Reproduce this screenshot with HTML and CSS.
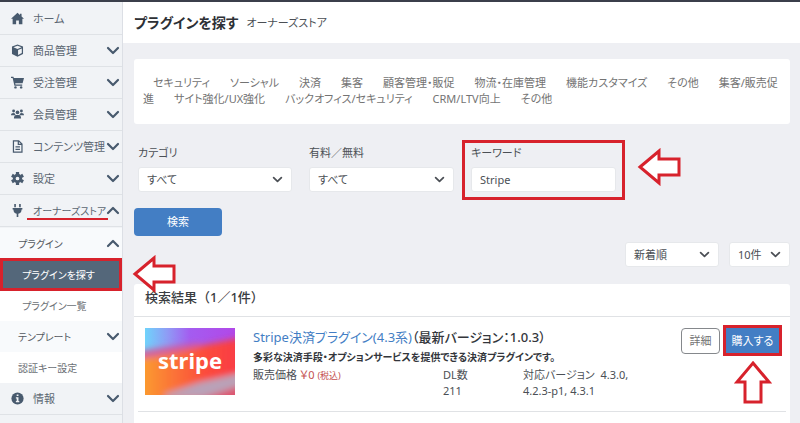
FILE: index.html
```
<!DOCTYPE html>
<html lang="ja">
<head>
<meta charset="UTF-8">
<meta name="viewport" content="width=device-width,initial-scale=1.0">
<title>プラグインを探す オーナーズストア</title>
<link rel="stylesheet" href="styles.css">
</head>
<body>
<!-- 共通で使う図形 -->
<svg class="defs" width="0" height="0" aria-hidden="true">
    <symbol id="down" viewBox="0 0 14 9"><path d="M2 2l5 5 5-5" fill="none" stroke="currentColor" stroke-width="2.2" stroke-linecap="round" stroke-linejoin="round"/></symbol>
    <symbol id="up" viewBox="0 0 14 9"><path d="M2 7l5-5 5 5" fill="none" stroke="currentColor" stroke-width="2.2" stroke-linecap="round" stroke-linejoin="round"/></symbol>
    <symbol id="arrow" viewBox="0 0 44 38"><path d="M3 19L22 3v8h20v16H22v8z" fill="#fff" stroke="#d7222c" stroke-width="3"/></symbol>
</svg>
<div class="page">
    <!-- 左のメニュー -->
    <nav class="side">
        <a class="item" href="#">
            <svg class="icon" viewBox="0 0 16 16"><path d="M8 1L0 8.200h2V15h4.300v-4.500h3.400V15H14V8.200h2L13 5.500V2h-2v1.700z"/></svg>
            <span>ホーム</span>
        </a>
        <a class="item" href="#">
            <svg class="icon" viewBox="0 0 16 16"><path d="M8 .5l6.800 2.700v9L8 15.600 1.200 12.200v-9z"/><path d="M3 4l5 2 5-2-5-1.900z" fill="#f1f3f6"/><path d="M8.700 7.400l4.600-1.900v5.700L8.700 13.500z" fill="#f1f3f6"/></svg>
            <span>商品管理</span>
            <svg class="chev"><use href="#down"/></svg>
        </a>
        <a class="item" href="#">
            <svg class="icon" viewBox="0 0 16 16"><path d="M0 1h3l.5 1.500H16L14.300 9H5.200l.3 1.500h8.300V12H4.200L2 2.500H0z"/><circle cx="5.500" cy="14" r="1.500"/><circle cx="12.500" cy="14" r="1.500"/></svg>
            <span>受注管理</span>
            <svg class="chev"><use href="#down"/></svg>
        </a>
        <a class="item" href="#">
            <svg class="icon" viewBox="0 1 20 16"><circle cx="4" cy="3.600" r="2.200"/><circle cx="16" cy="3.600" r="2.200"/><circle cx="10" cy="5.800" r="2.800"/><path d="M0 10c0-2.500 1.500-3.500 3.500-3.500 1.200 0 2 .2 2.600 1L7 10zM20 10c0-2.500-1.500-3.500-3.500-3.500-1.200 0-2 .2-2.600 1L13 10zM4.500 15c0-3.500 1.500-5.300 4-5.300h3c2.500 0 4 1.800 4 5.300z"/></svg>
            <span>会員管理</span>
            <svg class="chev"><use href="#down"/></svg>
        </a>
        <a class="item" href="#">
            <svg class="icon" viewBox="0 0 16 16"><path d="M3 1h6.500L13.500 5v10H3zM9 1v4.500h4.500M5.500 8.500H11M5.500 11.500H11" fill="none" stroke="currentColor" stroke-width="1.500"/></svg>
            <span>コンテンツ管理</span>
            <svg class="chev"><use href="#down"/></svg>
        </a>
        <a class="item" href="#">
            <svg class="icon" viewBox="0 0 16 16"><circle cx="8" cy="8" r="4" fill="none" stroke="currentColor" stroke-width="3.400"/><path d="M8 0v3M8 13v3M1.100 4l2.600 1.500M12.300 10.500l2.600 1.500M1.100 12l2.600-1.500M12.300 5.500L14.900 4" stroke="currentColor" stroke-width="4"/></svg>
            <span>設定</span>
            <svg class="chev"><use href="#down"/></svg>
        </a>
        <a class="item" href="#">
            <svg class="icon" viewBox="0 0 16 16"><path d="M4 0h2v4H4zM10 0h2v4h-2zM2 5h12v1.800h-1c0 3-1.500 4.700-4 5.200v4H7v-4C4.500 11.500 3 9.800 3 6.800H2z"/></svg>
            <span class="marked">オーナーズストア</span>
            <svg class="chev"><use href="#up"/></svg>
        </a>
        <div class="sub">
            <a class="subitem head" href="#"><span>プラグイン</span><svg class="chev"><use href="#up"/></svg></a>
            <a class="subitem child active" href="#">プラグインを探す
                <svg class="point point-menu"><use href="#arrow"/></svg>
            </a>
            <a class="subitem child" href="#">プラグイン一覧</a>
            <a class="subitem head" href="#"><span>テンプレート</span><svg class="chev"><use href="#down"/></svg></a>
            <a class="subitem" href="#">認証キー設定</a>
        </div>
        <a class="item" href="#">
            <svg class="icon" viewBox="0 0 16 16"><circle cx="8" cy="8" r="7.500"/><path d="M7 3h2.200v2H7zM6 6.500h3.200V11h1v1.500H6V11h1V8H6z" fill="#f1f3f6"/></svg>
            <span>情報</span>
            <svg class="chev"><use href="#down"/></svg>
        </a>
    </nav>
    <!-- 右の内容 -->
    <div class="main">
        <header class="title">
            <h1>プラグインを探す</h1>
            <span>オーナーズストア</span>
        </header>
        <main class="content">
            <div class="card tags">
                <a href="#">セキュリティ</a><a href="#">ソーシャル</a><a href="#">決済</a><a href="#">集客</a><a href="#">顧客管理・販促</a><a href="#">物流・在庫管理</a><a href="#">機能カスタマイズ</a><a href="#">その他</a><a href="#">集客/販売促進</a><a href="#">サイト強化/UX強化</a><a href="#">バックオフィス/セキュリティ</a><a href="#">CRM/LTV向上</a><a href="#">その他</a>
            </div>
            <form>
                <div class="filters">
                    <div class="field">
                        <label for="category">カテゴリ</label>
                        <div class="select">
                            <select id="category"><option>すべて</option></select>
                            <svg><use href="#down"/></svg>
                        </div>
                    </div>
                    <div class="field">
                        <label for="price">有料／無料</label>
                        <div class="select">
                            <select id="price"><option>すべて</option></select>
                            <svg><use href="#down"/></svg>
                        </div>
                    </div>
                    <div class="field keyword">
                        <label for="keyword">キーワード</label>
                        <input id="keyword" type="text" value="Stripe">
                        <svg class="point point-key"><use href="#arrow"/></svg>
                    </div>
                </div>
                <button class="search" type="submit">検索</button>
                <div class="sort">
                    <div class="select order">
                        <select aria-label="並び順"><option>新着順</option></select>
                        <svg><use href="#down"/></svg>
                    </div>
                    <div class="select count">
                        <select aria-label="表示件数"><option>10件</option></select>
                        <svg><use href="#down"/></svg>
                    </div>
                </div>
            </form>
            <section class="card result">
                <h2>検索結果（1／1件）</h2>
                <article class="plugin">
                    <svg class="logo" viewBox="0 0 90 67" role="img" aria-label="stripe">
                        <defs>
                            <linearGradient id="sky" x1="0" y1="0" x2="1" y2="0"><stop offset="0" stop-color="#6fd3fb"/><stop offset=".25" stop-color="#8f9bf5"/><stop offset=".5" stop-color="#a45cf0"/><stop offset="1" stop-color="#b148e8"/></linearGradient>
                            <linearGradient id="fire" x1="0" y1="0" x2="1" y2="0"><stop offset="0" stop-color="#fba62c"/><stop offset=".3" stop-color="#fb7a36"/><stop offset=".65" stop-color="#fc4a3c"/><stop offset="1" stop-color="#f83a48"/></linearGradient>
                            <filter id="soft" x="-20%" y="-20%" width="140%" height="140%"><feGaussianBlur stdDeviation="3"/></filter>
                        </defs>
                        <rect width="90" height="67" fill="url(#sky)"/>
                        <g filter="url(#soft)">
                            <path d="M-10 28L30 22 65 16 100 9v70H-10z" fill="url(#fire)"/>
                            <path d="M-10 24L30 18 55 15 55 19 30 25-10 32z" fill="#d45a9c"/>
                            <path d="M20 66L55 54 100 44v12L60 70H20z" fill="#b9a2b8"/>
                            <path d="M50 72L100 57v18z" fill="#dd5570"/>
                        </g>
                        <text x="45" y="41" text-anchor="middle">stripe</text>
                    </svg>
                    <div class="info">
                        <h3><a href="#">Stripe決済プラグイン(4.3系)</a>（最新バージョン：1.0.3）</h3>
                        <p class="desc">多彩な決済手段・オプションサービスを提供できる決済プラグインです。</p>
                        <div class="data">
                            <p>販売価格 <span class="yen">￥0 <small>(税込)</small></span></p>
                            <p>DL数<br>211</p>
                            <p>対応バージョン&nbsp; 4.3.0, 4.2.3-p1, 4.3.1</p>
                        </div>
                    </div>
                    <div class="buttons">
                        <button class="detail" type="button">詳細</button>
                        <div class="buywrap">
                            <button class="buy" type="button">購入する</button>
                            <svg class="point point-buy"><use href="#arrow"/></svg>
                        </div>
                    </div>
                </article>
            </section>
        </main>
    </div>
</div>
</body>
</html>
```
FILE: styles.css
```
/*初期化*/
*{
    margin: 0;
    padding: 0;
    box-sizing: border-box;
}
body{
    font: 11px/16px "Noto Sans", "Noto Sans CJK JP", sans-serif;
    font-feature-settings: "palt";
    color: #4b4f55;
    background: #eeeff3;
    border-top: 2px solid #3b3f4b;
    overflow: hidden;
}
a{
    color: inherit;
    text-decoration: none;
}
button, input, select{
    font: inherit;
    font-feature-settings: inherit;
    color: inherit;
}
.defs{
    position: absolute;
}
.page{
    display: flex;
    min-height: 100vh;
}
/*左のメニュー*/
.side{
    flex: 0 0 123px;
    min-width: 0;
    padding-top: 1px;
    background: #f1f3f6;
    border-right: 1px solid #dcdfe5;
    white-space: nowrap;
}
.item{
    display: flex;
    align-items: center;
    height: 32px;
    padding: 0 2px 0 11px;
    border-bottom: 1px solid #dfe2e6;
    color: #5b6672;
}
.icon{
    flex: none;
    width: 13px;
    height: 13px;
    margin-right: 9px;
    fill: currentColor;
    color: #485a6e;
}
.chev{
    flex: none;
    width: 14px;
    height: 9px;
    margin-left: auto;
    color: #485a6e;
}
.marked{
    position: relative;
    font-size: 10px;
}
/*赤い下線*/
.marked::after{
    content: "";
    position: absolute;
    left: -6px;
    right: -2px;
    bottom: -1px;
    height: 2px;
    background: #d7222c;
}
.sub{
    padding-top: 1px;
}
.subitem{
    display: flex;
    align-items: center;
    height: 31px;
    padding: 0 2px 0 18px;
    background: #fff;
    color: #6b6f75;
    font-size: 10px;
}
.subitem.head{
    background: #f8fafc;
    color: #53585f;
}
.subitem.child{
    padding-left: 22px;
}
.subitem.active{
    position: relative;
    height: 33px;
    margin: -1px 0;
    padding-left: 19px;
    border: 3px solid #d7222c;
    background: #54677a;
    color: #fff;
}
/*赤い矢印*/
.point{
    position: absolute;
    width: 44px;
    height: 38px;
    z-index: 1;
}
.point-menu{
    left: 129px;
    top: -6px;
}
.point-key{
    left: calc(100% + 21px);
    top: 3px;
}
.point-buy{
    left: 8px;
    top: 38px;
    transform: rotate(90deg);
}
/*見出し*/
.main{
    flex: 1;
    min-width: 0;
}
.title{
    display: flex;
    align-items: center;
    gap: 8px;
    height: 41px;
    padding-left: 11px;
    background: #fff;
}
.title h1{
    font-size: 14px;
    color: #2d3035;
}
.content{
    padding: 16px 10px 0 11px;
}
.card{
    background: #fff;
    border-radius: 3px;
}
.tags{
    padding: 16px 8px 17px 9px;
    color: #737373;
}
.tags a{
    margin: 0 10px;
}
/*検索条件*/
.filters{
    display: grid;
    grid-template-columns: 154fr 145fr 145fr 157fr;
    gap: 17px;
    padding: 21px 0 0 4px;
}
.field label{
    display: block;
    margin-bottom: 6px;
}
.field input, .select select{
    display: block;
    width: 100%;
    height: 25px;
    padding: 0 8px;
    border: 1px solid #e6e8eb;
    border-radius: 3px;
    background: #fff;
    appearance: none;
}
.select{
    position: relative;
}
.select svg{
    position: absolute;
    right: 9px;
    top: 9px;
    width: 11px;
    height: 7px;
    pointer-events: none;
}
.keyword{
    position: relative;
}
/*キーワードを囲む赤い枠*/
.keyword::before{
    content: "";
    position: absolute;
    inset: -5px -9px -8px;
    border: 3px solid #d7222c;
    pointer-events: none;
}
.search{
    display: block;
    width: 88px;
    height: 28px;
    margin-top: 16px;
    border: 0;
    border-radius: 4px;
    background: #437ec4;
    color: #fff;
}
.sort{
    display: flex;
    justify-content: flex-end;
    gap: 10px;
    margin-top: 6px;
}
.order{
    width: 94px;
}
.count{
    width: 61px;
}
/*検索結果*/
.result{
    min-height: 160px;
    margin-top: 17px;
}
.result h2{
    height: 33px;
    padding-left: 11px;
    border-bottom: 1px solid #e0e2e5;
    font-size: 13px;
    font-weight: 500;
    font-feature-settings: normal;
    line-height: 27px;
    color: #3a3d42;
}
.plugin{
    display: flex;
    height: 95px;
    margin: 0 4px;
    padding: 11px 4px 0 7px;
    border-bottom: 1px solid #e0e2e5;
}
.logo{
    flex: none;
    width: 90px;
    height: 67px;
    margin-right: 18px;
}
.logo text{
    font: 700 22px "Noto Sans", sans-serif;
    fill: #fff;
}
.info{
    flex: 1;
}
.info h3{
    font-size: 13px;
    font-weight: 500;
    line-height: 18px;
    color: #33363b;
}
.info h3 a{
    font-weight: 400;
    color: #437ec4;
}
.desc{
    margin: 3px 0 2px;
    font-size: 10px;
    font-weight: 700;
    color: #33363b;
}
.data{
    display: grid;
    grid-template-columns: 190px 80px 120px;
}
.yen{
    color: #c4504f;
}
.yen small{
    font-size: 9px;
}
.buttons{
    display: flex;
    align-items: flex-start;
    gap: 3px;
}
.detail{
    width: 39px;
    height: 26px;
    border: 1px solid #85888c;
    border-radius: 4px;
    background: #fff;
    color: #737373;
}
.buywrap{
    position: relative;
    margin-top: -3px;
}
.buy{
    width: 59px;
    height: 31px;
    border: 3px solid #d7222c;
    background: #437ec4;
    color: #fff;
}
```
